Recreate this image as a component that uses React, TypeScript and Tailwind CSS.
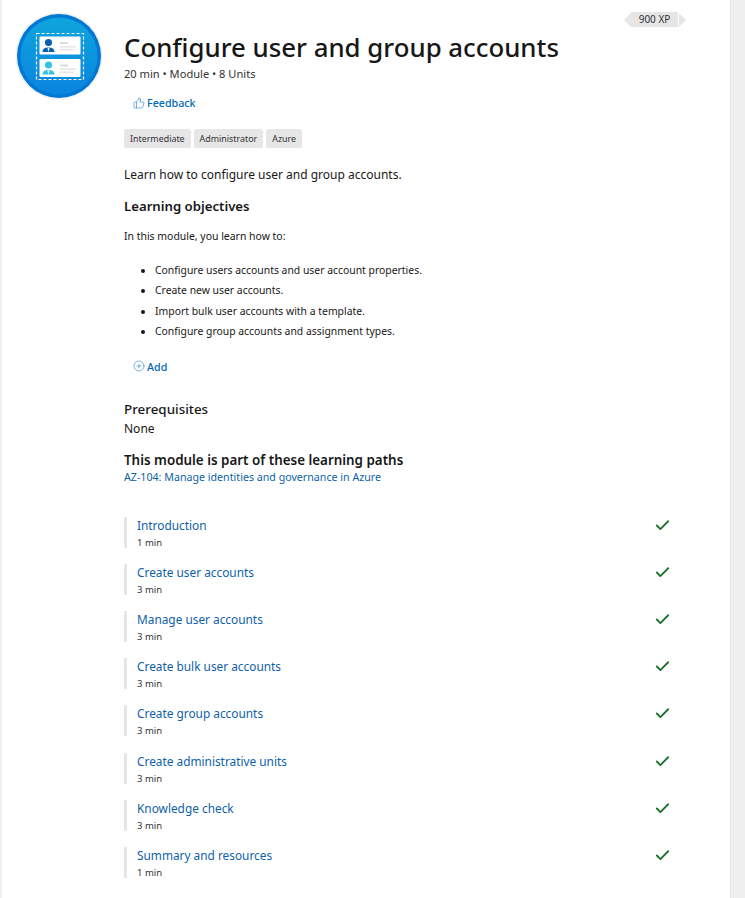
import { Check, CirclePlus, ThumbsUp } from "lucide-react";

const OBJECTIVES = [
  "Configure users accounts and user account properties.",
  "Create new user accounts.",
  "Import bulk user accounts with a template.",
  "Configure group accounts and assignment types.",
];

const UNITS = [
  { title: "Introduction", time: "1 min" },
  { title: "Create user accounts", time: "3 min" },
  { title: "Manage user accounts", time: "3 min" },
  { title: "Create bulk user accounts", time: "3 min" },
  { title: "Create group accounts", time: "3 min" },
  { title: "Create administrative units", time: "3 min" },
  { title: "Knowledge check", time: "3 min" },
  { title: "Summary and resources", time: "1 min" },
];

function ModuleBadge() {
  return (
    <svg width="88" height="88" viewBox="0 0 88 88" className="shrink-0">
      <defs>
        <linearGradient id="badgeFill" x1="0" y1="0" x2="0" y2="1">
          <stop offset="0" stopColor="#0fa5dc" />
          <stop offset="1" stopColor="#0a84e0" />
        </linearGradient>
      </defs>
      <circle cx="44" cy="44" r="43.5" fill="#efefef" />
      <circle cx="44" cy="44" r="42" fill="#0078d4" />
      <circle cx="44" cy="44" r="38.5" fill="url(#badgeFill)" />
      <rect x="21.5" y="21.5" width="47" height="46" fill="none" stroke="#fff" strokeWidth="1.2" strokeDasharray="3 2" />
      <rect x="24.5" y="24.5" width="41" height="18" rx="1" fill="#fff" />
      <rect x="24.5" y="47" width="41" height="18" rx="1" fill="#fff" />
      <circle cx="33.5" cy="30.5" r="3.6" fill="#0a5fb4" />
      <path d="M27.5 40c0-3.5 2.5-4.6 6-4.6s6 1.1 6 4.6z" fill="#0a5fb4" />
      <path d="M33.5 35.5l-1 1 1 3.5 1-3.5z" fill="#fff" />
      <circle cx="33.5" cy="53" r="3.6" fill="#32c4e4" />
      <path d="M27.5 62.5c0-3.5 2.5-4.6 6-4.6s6 1.1 6 4.6z" fill="#32c4e4" />
      <path d="M33.5 58l-1 1 1 3.5 1-3.5z" fill="#fff" />
      <rect x="45" y="30" width="8" height="2" fill="#dcdcdc" />
      <rect x="45" y="34" width="16" height="1.5" fill="#e6e6e6" />
      <rect x="45" y="37" width="14" height="1.5" fill="#e6e6e6" />
      <rect x="45" y="52.5" width="8" height="2" fill="#dcdcdc" />
      <rect x="45" y="56.5" width="16" height="1.5" fill="#e6e6e6" />
      <rect x="45" y="59.5" width="14" height="1.5" fill="#e6e6e6" />
    </svg>
  );
}

function XpRibbon() {
  return (
    <div className="flex items-center h-[15px] text-[10px] text-[#333] gap-px">
      <div className="w-0 h-0 border-y-[7.5px] border-y-transparent border-r-[7px] border-r-[#e6e6e6]" />
      <div className="h-full w-[47px] bg-[#e6e6e6] flex items-center justify-center -ml-px">900 XP</div>
      <div className="w-0 h-0 border-y-[7.5px] border-y-transparent border-l-[7px] border-l-[#e6e6e6]" />
    </div>
  );
}

export default function App() {
  return (
    <div className="min-h-[898px] bg-[#f0f0f0] pl-[2px] pr-[14px] font-['Noto_Sans',sans-serif] text-[#171717]">
      <div className="bg-white h-[898px] border-r border-[#e6e6e6] flex relative overflow-hidden">
        <div className="w-[122px] shrink-0 pl-[13px] pt-[12px]">
          <ModuleBadge />
        </div>
        <div className="flex-1 pr-[60px]">
          <div className="absolute right-[44px] top-[12px]">
            <XpRibbon />
          </div>
          <h1 className="text-[25.8px] leading-[36px] font-medium mt-[29px] text-[#171717]">Configure user and group accounts</h1>
          <p className="text-[11.1px] leading-[14px] mt-[2px] text-[#333]">20 min • Module • 8 Units</p>
          <a className="flex items-center gap-[2px] mt-[15px] ml-[9px] h-[14px] text-[10.7px] font-medium text-[#0067b8]">
            <ThumbsUp size={12} strokeWidth={1} />
            Feedback
          </a>
          <div className="flex gap-[3px] mt-[19px]">
            {["Intermediate", "Administrator", "Azure"].map(tag => (
              <span key={tag} className="h-[19px] px-[6px] rounded-[2px] bg-[#e6e6e6] text-[8.9px] leading-[19px] text-[#333]">{tag}</span>
            ))}
          </div>
          <p className="text-[12px] leading-[18px] mt-[18px]">Learn how to configure user and group accounts.</p>
          <h2 className="text-[13.2px] leading-[18px] font-semibold mt-[13px]">Learning objectives</h2>
          <p className="text-[10.45px] leading-[14px] mt-[14px]">In this module, you learn how to:</p>
          <ul className="mt-[20px] ml-[31px] flex flex-col gap-[5.8px] text-[10.4px] leading-[14.5px] list-disc pl-0">
            {OBJECTIVES.map(o => <li key={o}>{o}</li>)}
          </ul>
          <a className="flex items-center gap-[2px] mt-[22px] ml-[9px] h-[14px] text-[10.7px] font-medium text-[#0067b8]">
            <CirclePlus size={12} strokeWidth={1} className="-mt-[2px]" />
            Add
          </a>
          <h2 className="text-[13.4px] leading-[18px] font-medium mt-[26px]">Prerequisites</h2>
          <p className="text-[12px] leading-[18px] mt-[2px]">None</p>
          <h2 className="text-[13.4px] leading-[18px] font-semibold mt-[13px]">This module is part of these learning paths</h2>
          <a className="block text-[10.66px] leading-[14px] mt-[1px] text-[#0f5fa8]">AZ-104: Manage identities and governance in Azure</a>
          <div className="mt-[32.6px] flex flex-col gap-[16.14px]">
            {UNITS.map(u => (
              <div key={u.title} className="flex items-start justify-between h-[31px] border-l-[3px] border-[#e6e6e6] pl-[10px]">
                <div>
                  <a className="block text-[11.85px] leading-[16px] text-[#0f5fa8]">{u.title}</a>
                  <p className="text-[9.5px] leading-[14px] mt-[3px] text-[#333]">{u.time}</p>
                </div>
                <Check size={17} strokeWidth={2.5} className="text-[#17702b] -mr-[1px]" />
              </div>
            ))}
          </div>
        </div>
      </div>
    </div>
  );
}
